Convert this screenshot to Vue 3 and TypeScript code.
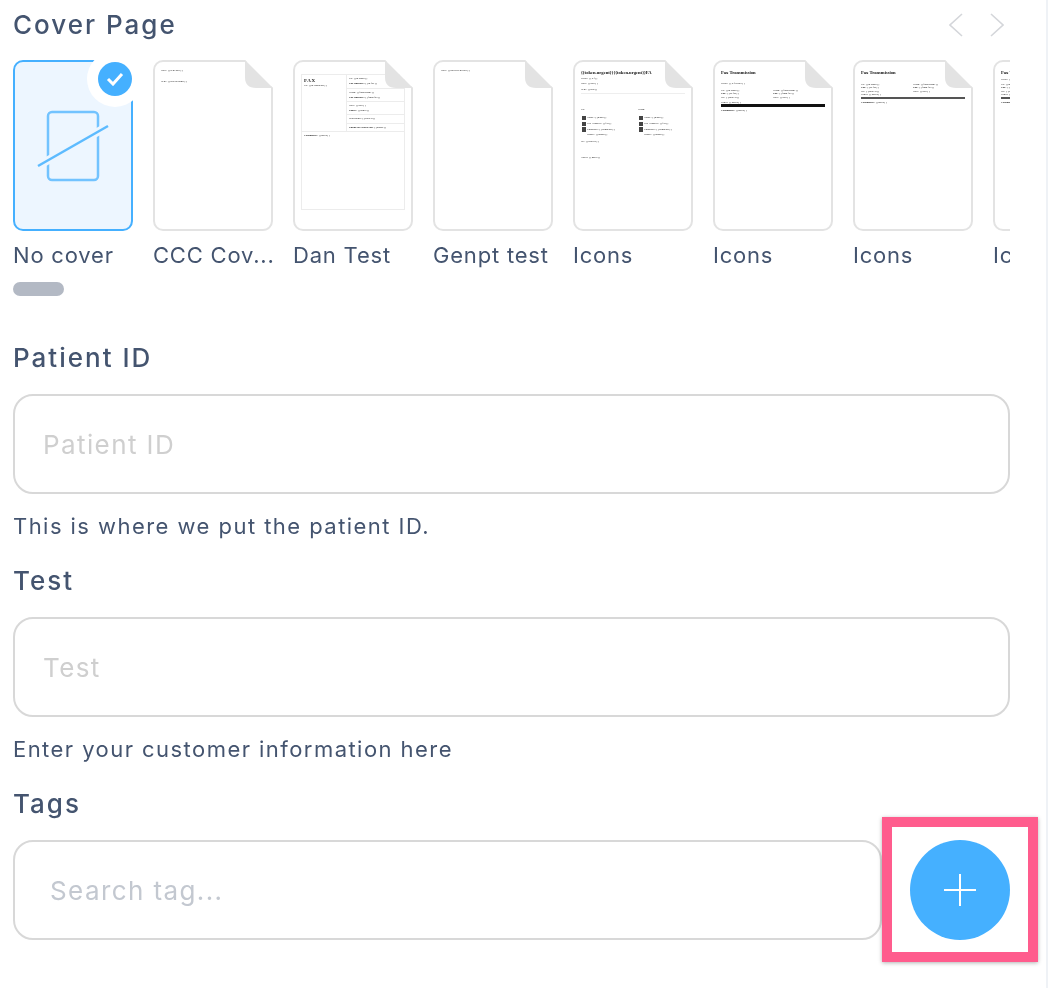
<template>
  <div class="page">
    <div class="form">
      <div class="cover-head">
        <h2 class="section-title">Cover Page</h2>
        <div class="nav">
          <svg width="14" height="24" viewBox="0 0 14 24"><path d="M13 1 1 12l12 11" /></svg>
          <svg width="14" height="24" viewBox="0 0 14 24"><path d="M1 1l12 11L1 23" /></svg>
        </div>
      </div>

      <div class="carousel">
        <div class="cover">
          <div class="sheet selected">
            <svg class="no-cover" width="116" height="167" viewBox="0 0 116 167">
              <rect x="33" y="50" width="50" height="68" rx="4" />
              <path class="slash-gap" d="M23 104 93 64" />
              <path class="slash" d="M23 104 93 64" />
            </svg>
          </div>
          <span class="check">
            <span class="check-dot">
              <svg width="18" height="14" viewBox="0 0 18 14"><path d="M2 7l5 5 9-10" /></svg>
            </span>
          </span>
          <div class="cover-name">No cover</div>
        </div>

        <div v-for="c in covers" :key="c.id" class="cover">
          <div class="sheet">
            <div class="doc">
              <template v-if="c.kind === 'plain'">
                <p v-for="l in c.lines" :key="l" class="line plain-line">{{ l }}</p>
              </template>

              <table v-else-if="c.kind === 'table'" class="fax-table">
                <tbody>
                  <tr>
                    <td rowspan="5" class="fax-left">
                      <div class="fax-big">FAX</div>
                      <div class="line">To: {{ tok('to.company') }}</div>
                    </td>
                    <td class="fax-cell h14"><div class="line">To: {{ tok('to.name') }}</div><div class="line"><b>Fax number:</b> {{ tok('to.fax') }}</div></td>
                  </tr>
                  <tr><td class="fax-cell h13"><div class="line">From: {{ tok('from.name') }}</div><div class="line"><b>Fax number:</b> {{ tok('from.fax') }}</div></td></tr>
                  <tr><td class="fax-cell h13"><div class="line">Date: {{ tok('date') }}</div><div class="line"><b>Pages:</b> {{ tok('pages') }}</div></td></tr>
                  <tr><td class="fax-cell h9"><div class="line">Regarding: {{ tok('subject') }}</div></td></tr>
                  <tr><td class="fax-cell h8"><div class="line"><b>Phone for follow up:</b> {{ tok('phone') }}</div></td></tr>
                  <tr><td colspan="2" class="fax-comments"><div class="line"><b>Comments:</b> {{ tok('notes') }}</div></td></tr>
                </tbody>
              </table>

              <div v-else-if="c.kind === 'icons'" class="icons-doc">
                <div class="doc-title icons-title">{{ tok('token.urgent') }}{{ tok('token.urgent') }}FA</div>
                <p class="line gap2">Order: {{ tok('ref') }}</p>
                <p class="line gap2">Date: {{ tok('date') }}</p>
                <p class="line gap2">Sent: {{ tok('sent') }}</p>
                <div class="rule"></div>
                <div class="two-col">
                  <div v-for="side in ['To:', 'From:']" :key="side" class="col">
                    <p class="line col-head">{{ side }}</p>
                    <p class="line person"><i class="ico"></i>Name: {{ tok('name') }}</p>
                    <p class="line person"><i class="ico"></i>Fax Number: {{ tok('fax') }}</p>
                    <p class="line person"><i class="ico tall"></i>Company: {{ tok('company') }}</p>
                    <p class="line phone">Phone: {{ tok('phone') }}</p>
                  </div>
                </div>
                <p class="line re">Re: {{ tok('subject') }}</p>
                <p class="line notes">Notes: {{ tok('notes') }}</p>
              </div>

              <div v-else class="trans-doc" :class="c.kind">
                <div class="doc-title trans-title">Fax Transmission</div>
                <p v-if="c.kind !== 'trans-b'" class="line trans-sub">Order: {{ tok('reference') }}</p>
                <div class="trans-grid">
                  <div>
                    <p class="line">To: {{ tok('to.name') }}</p>
                    <p class="line"><b>Fax:</b> {{ tok('to.fax') }}</p>
                    <p class="line">RE: {{ tok('subject') }}</p>
                    <p class="line trans-pages">Pages: {{ tok('pages') }}</p>
                  </div>
                  <div>
                    <p class="line">From: {{ tok('from.name') }}</p>
                    <p class="line"><b>Fax:</b> {{ tok('from.fax') }}</p>
                    <p class="line">Date: {{ tok('date') }}</p>
                  </div>
                </div>
                <div class="trans-bar"></div>
                <p class="line"><b>Comments:</b> {{ tok('notes') }}</p>
              </div>
            </div>
            <svg class="fold" width="28" height="28" viewBox="0 0 28 28">
              <path class="fold-cut" d="M0 0h28v28z" />
              <path class="fold-flap" d="M0 0l28 28H11Q0 28 0 17z" />
            </svg>
          </div>
          <div class="cover-name">{{ c.name }}</div>
        </div>
      </div>
      <div class="scroll-thumb"></div>

      <div v-for="f in fields" :key="f.label" class="field" :class="f.cls">
        <label class="section-title">{{ f.label }}</label>
        <input class="text-input" type="text" :placeholder="f.label" />
        <p class="help">{{ f.help }}</p>
      </div>

      <div class="field tags-field">
        <label class="section-title">Tags</label>
        <div class="tags-row">
          <input class="text-input tag-input" type="text" placeholder="Search tag..." />
          <button class="add-btn" type="button" aria-label="Add tag">
            <svg width="34" height="34" viewBox="0 0 34 34"><path d="M17 1v32M1 17h32" /></svg>
          </button>
          <span class="callout"></span>
        </div>
      </div>
    </div>
  </div>
</template>

<script setup lang="ts">
interface Cover {
  id: number
  name: string
  kind: 'plain' | 'table' | 'icons' | 'trans-a' | 'trans-b' | 'trans-c'
  lines?: string[]
}

const tok = (name: string) => `{{${name}}}`

const covers: Cover[] = [
  { id: 1, name: 'CCC Cov...', kind: 'plain', lines: ['Date: {{sent.date}}', 'Sent: {{sent.to.name}}'] },
  { id: 2, name: 'Dan Test', kind: 'table' },
  { id: 3, name: 'Genpt test', kind: 'plain', lines: ['Date: {{token.sent.date}}'] },
  { id: 4, name: 'Icons', kind: 'icons' },
  { id: 5, name: 'Icons', kind: 'trans-a' },
  { id: 6, name: 'Icons', kind: 'trans-b' },
  { id: 7, name: 'Icons', kind: 'trans-c' },
]

const fields = [
  { label: 'Patient ID', help: 'This is where we put the patient ID.', cls: 'first-field' },
  { label: 'Test', help: 'Enter your customer information here', cls: '' },
]
</script>

<style>
html,
body {
  margin: 0;
  background: #eff2f6;
}
</style>

<style scoped>
.page {
  width: 1046px;
  height: 988px;
  overflow: hidden;
  background: #fff;
  font-family: Inter, "Liberation Sans", sans-serif;
  color: #44546f;
}

.form {
  width: 997px;
  margin-left: 13px;
  will-change: opacity;
}

.cover-head {
  display: flex;
  justify-content: space-between;
  align-items: center;
  height: 50px;
}

.section-title {
  display: block;
  margin: 0;
  font-size: 26px;
  line-height: 50px;
  font-weight: 500;
  letter-spacing: 2px;
  color: #44546f;
}

.nav {
  display: flex;
  gap: 27px;
  margin-right: 6px;
}

.nav svg {
  display: block;
}

.nav path {
  fill: none;
  stroke: #d4d6da;
  stroke-width: 1.6;
}

.carousel {
  display: flex;
  gap: 20px;
  margin-top: 10px;
  overflow: hidden;
}

.cover {
  position: relative;
  flex: 0 0 120px;
  min-width: 0;
}

.sheet {
  position: relative;
  box-sizing: border-box;
  height: 171px;
  border: 2px solid #e3e3e3;
  border-radius: 10px;
  background: #fff;
}

.sheet.selected {
  border-color: #45b0ff;
  background: #edf6ff;
}

.no-cover {
  display: block;
}

.no-cover rect {
  fill: none;
  stroke: #72c3ff;
  stroke-width: 2.5;
}

.no-cover .slash-gap {
  stroke: #edf6ff;
  stroke-width: 8;
}

.no-cover .slash {
  stroke: #5dbbff;
  stroke-width: 2.5;
}

.check {
  position: absolute;
  top: -9px;
  left: 74px;
  width: 56px;
  height: 56px;
  border-radius: 50%;
  background: #fff;
  display: flex;
  align-items: center;
  justify-content: center;
}

.check-dot {
  width: 34px;
  height: 34px;
  border-radius: 50%;
  background: #45b0ff;
  display: flex;
  align-items: center;
  justify-content: center;
}

.check-dot path {
  fill: none;
  stroke: #fff;
  stroke-width: 3;
}

.cover-name {
  margin-top: 9px;
  font-size: 22px;
  line-height: 30px;
  letter-spacing: 0.8px;
  white-space: nowrap;
  color: #44546f;
}

.fold {
  position: absolute;
  top: -2px;
  right: -2px;
}

.fold-cut {
  fill: #fff;
}

.fold-flap {
  fill: #e3e3e3;
}

.doc {
  box-sizing: border-box;
  height: 100%;
  padding: 5px 6px;
  overflow: hidden;
  border-radius: 8px;
  font-family: "Liberation Serif", serif;
  color: #222;
}

.line {
  margin: 0;
  font-size: 2.8px;
  line-height: 4px;
  white-space: nowrap;
}

.plain-line {
  margin-top: 2px;
  margin-bottom: 7px;
}

.doc-title {
  font-size: 4.6px;
  line-height: 7px;
  font-weight: 700;
  white-space: nowrap;
  color: #111;
}

.fax-table {
  width: 104px;
  border-collapse: collapse;
  margin-top: 7px;
}

.fax-table td {
  box-sizing: border-box;
  border: 1px solid #ececec;
  padding: 2px 2px 0;
  vertical-align: top;
}

.fax-left {
  width: 45px;
}

.fax-big {
  font-size: 5px;
  line-height: 7px;
  font-weight: 700;
  letter-spacing: 0.6px;
}

.fax-table .line {
  line-height: 4.5px;
}

.h14 { height: 14px; }
.h13 { height: 13px; }
.h9 { height: 9px; }
.h8 { height: 8px; }

.fax-table .fax-comments {
  height: 78px;
}

.icons-doc {
  padding-top: 2px;
}

.gap2 {
  margin-top: 1.2px;
}

.rule {
  height: 1px;
  margin-top: 1.5px;
  background: #eee;
}

.two-col {
  display: grid;
  grid-template-columns: 57px 47px;
  margin-top: 14px;
}

.col-head {
  margin-bottom: 2.5px;
}

.person {
  display: flex;
  align-items: center;
  gap: 1px;
  height: 6px;
  padding-left: 1px;
}

.ico {
  width: 4px;
  height: 4px;
  background: #444;
}

.ico.tall {
  height: 5px;
}

.phone {
  padding-left: 6px;
}

.re {
  margin-top: 3px;
}

.notes {
  margin-top: 12px;
}

.trans-doc {
  padding-top: 2px;
}

.trans-sub {
  margin-top: 6px;
}

.trans-grid {
  display: grid;
  grid-template-columns: 52px 50px;
  margin-top: 3px;
}

.trans-grid .line {
  line-height: 3.3px;
}

.trans-a .trans-pages {
  margin-top: 2px;
}

.trans-b .trans-grid {
  margin-top: 7px;
}

.trans-c .trans-sub {
  margin-top: 2px;
}

.trans-c .trans-grid {
  margin-top: 1px;
}

.trans-bar {
  height: 2px;
  margin: 1px 0 2px;
  width: 104px;
  background: #555;
}

.trans-a .trans-bar {
  height: 3px;
  margin-top: 0;
  background: #111;
}

.scroll-thumb {
  width: 51px;
  height: 14px;
  margin-top: 12px;
  border-radius: 7px;
  background: #b3b9c4;
}

.first-field {
  margin-top: 37px;
}

.text-input {
  display: block;
  box-sizing: border-box;
  width: 100%;
  height: 100px;
  margin-top: 11px;
  padding: 0 28px;
  border: 2px solid #d8d8d8;
  border-radius: 20px;
  background: #fff;
  outline: none;
  font-family: inherit;
  font-size: 26px;
  letter-spacing: 1.4px;
  color: #44546f;
}

.text-input::placeholder {
  color: #cfcfcf;
  opacity: 1;
}

.help {
  margin: 17px 0 0;
  font-size: 22px;
  line-height: 30px;
  letter-spacing: 1.45px;
  color: #44546f;
}

.field + .field {
  margin-top: 15px;
}

.tags-row {
  position: relative;
  display: flex;
  gap: 28px;
  margin-top: 11px;
}

.tag-input {
  flex: 1;
  width: auto;
  margin-top: 0;
  padding: 0 35px;
}

.tag-input::placeholder {
  color: #c3c8d0;
}

.add-btn {
  flex: 0 0 100px;
  height: 100px;
  padding: 0;
  border: none;
  border-radius: 50%;
  background: #45b0ff;
  display: flex;
  align-items: center;
  justify-content: center;
}

.add-btn path {
  stroke: #fff;
  stroke-width: 2;
  fill: none;
}

.callout {
  position: absolute;
  left: 869px;
  top: -23px;
  box-sizing: border-box;
  width: 156px;
  height: 145px;
  border: 10px solid #ff5c8d;
  box-shadow: 0 1px 4px rgba(0, 0, 0, 0.3);
  pointer-events: none;
}
</style>
